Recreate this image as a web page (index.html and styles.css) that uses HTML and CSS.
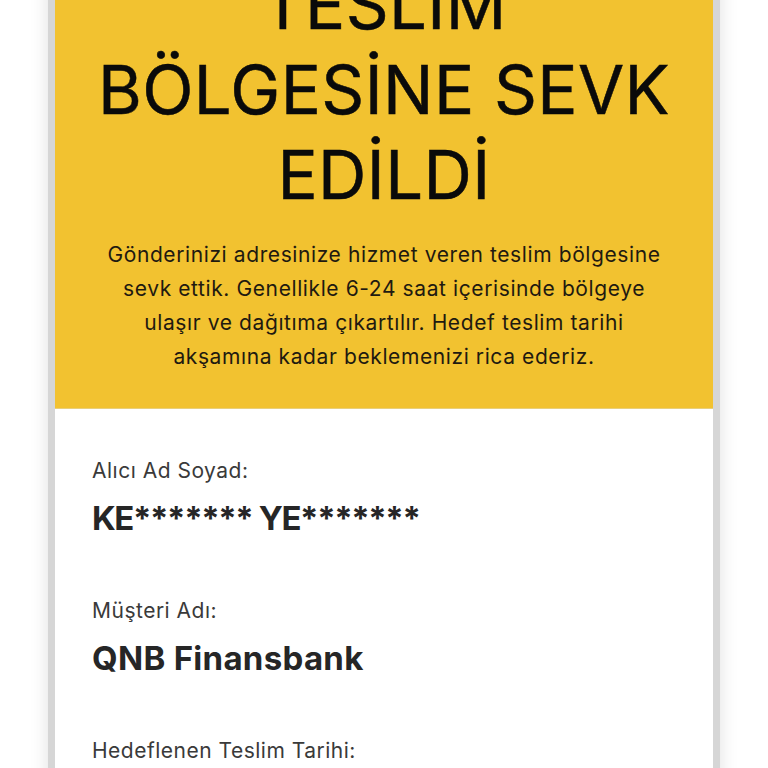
FILE: index.html
```html
<!DOCTYPE html>
<html lang="tr">
<head>
<meta charset="utf-8">
<link rel="stylesheet" href="styles.css">
</head>
<body>
<div class="card">
  <div class="header">
    <h1 class="title">TESLİM<br>BÖLGESİNE SEVK<br>EDİLDİ</h1>
    <p class="desc">Gönderinizi adresinize hizmet veren teslim bölgesine sevk ettik. Genellikle 6-24 saat içerisinde bölgeye ulaşır ve dağıtıma çıkartılır. Hedef teslim tarihi akşamına kadar beklemenizi rica ederiz.</p>
  </div>
  <div class="details">
    <div class="field">
      <div class="label">Alıcı Ad Soyad:</div>
      <div class="value masked">KE******* YE*******</div>
    </div>
    <div class="field">
      <div class="label">Müşteri Adı:</div>
      <div class="value">QNB Finansbank</div>
    </div>
    <div class="field">
      <div class="label">Hedeflenen Teslim Tarihi:</div>
      <div class="value">&nbsp;</div>
    </div>
  </div>
</div>
</body>
</html>
```
FILE: styles.css
```css
html, body {
  margin: 0;
  padding: 0;
  background: #ffffff;
  overflow: hidden;
}
body {
  font-family: Inter, "Liberation Sans", sans-serif;
}
.card {
  width: 658px;
  margin-left: 48px;
  margin-top: -38px;
  border-left: 7px solid #d6d6d6;
  border-right: 7px solid #d6d6d6;
  box-shadow: 0 0 18px rgba(0, 0, 0, 0.12);
  background: #ffffff;
  min-height: 900px;
}
.header {
  background: #f2c230;
  border-bottom: 1px solid #e9cf7a;
  padding: 0 40px 34px;
  text-align: center;
}
.title {
  margin: 0;
  font-size: 67px;
  font-weight: 400;
  line-height: 85px;
  letter-spacing: 0.4px;
  color: #0a0a0a;
  -webkit-text-stroke: 0.5px #0a0a0a;
}
.desc {
  margin: 21px 0 0;
  font-size: 21px;
  line-height: 34px;
  color: #1f1a10;
  letter-spacing: 0.6px;
}
.details {
  padding: 47px 37px 0;
}
.field {
  margin-bottom: 58px;
}
.label {
  font-size: 21px;
  line-height: 30px;
  color: #3a3a3a;
  letter-spacing: 0.5px;
}
.value {
  margin-top: 12px;
  font-size: 33px;
  line-height: 40px;
  font-weight: 700;
  color: #262626;
  letter-spacing: 0.3px;
}
.value.masked {
  letter-spacing: -1.4px;
}
```
